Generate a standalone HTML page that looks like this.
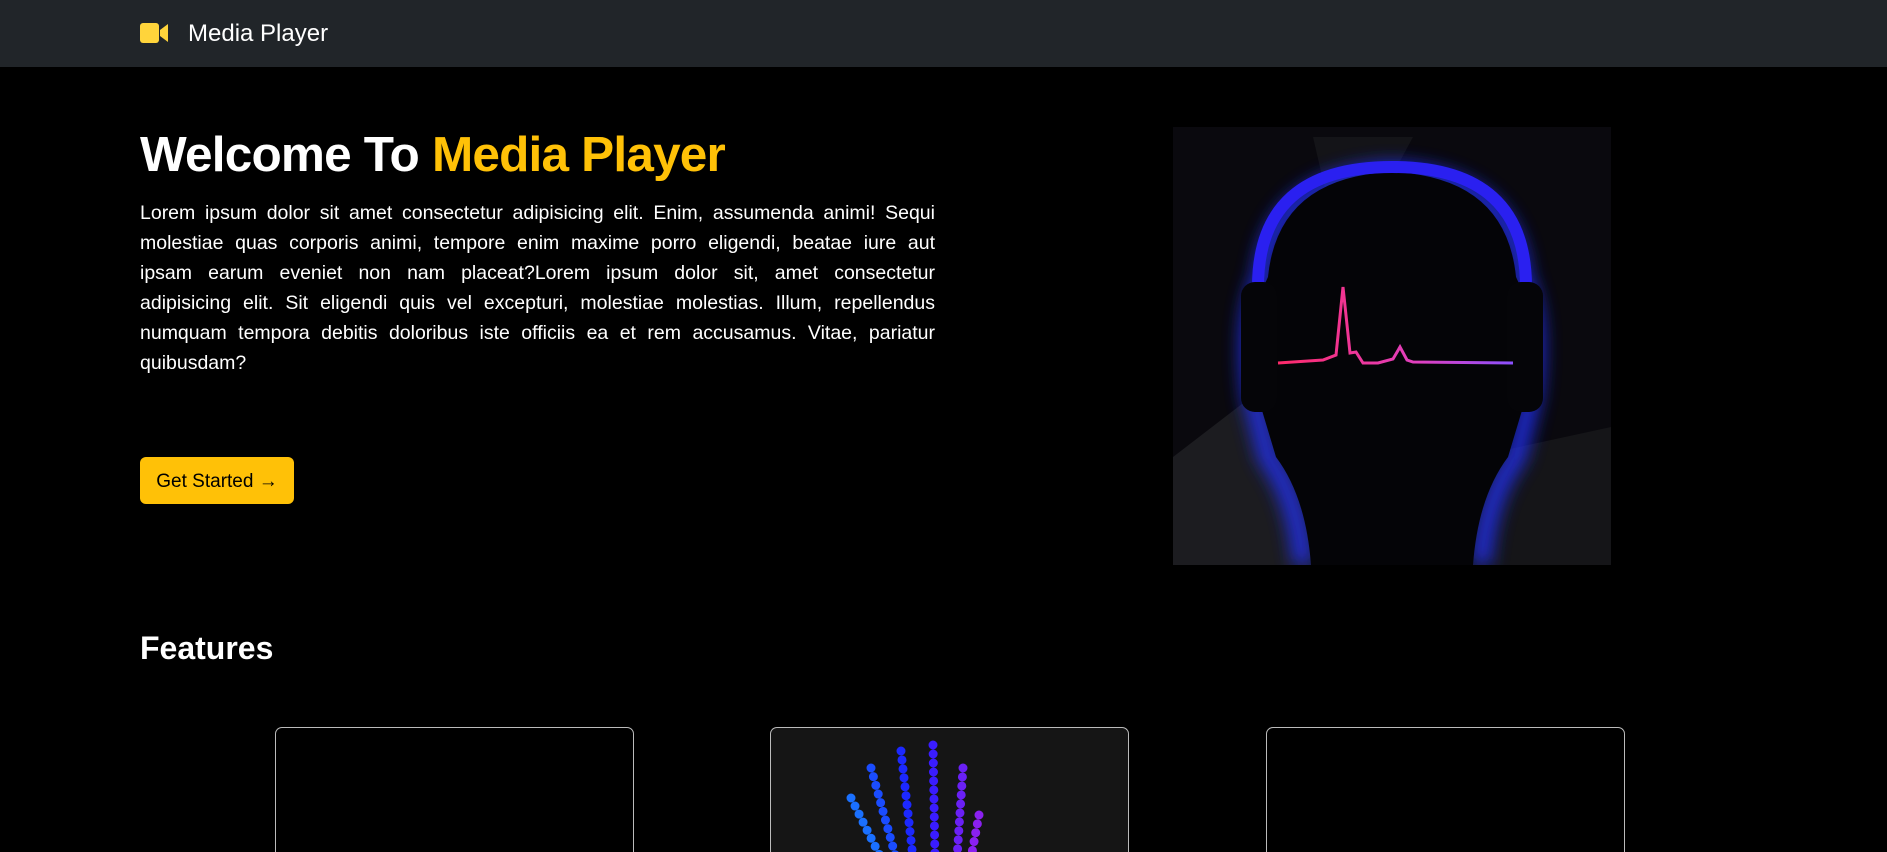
<!DOCTYPE html>
<html><head><meta charset="utf-8"><style>
*{margin:0;padding:0;box-sizing:border-box}
html{width:1887px;height:852px;overflow:hidden}
body{width:1887px;height:852px;background:#000;color:#fff;font-family:"Liberation Sans",sans-serif;overflow:hidden;position:relative}
.nav{position:absolute;left:0;top:0;width:1887px;height:67px;background:#212529}
.brand{position:absolute;left:188px;top:20px;font-size:24px;color:#fff}
h1{position:absolute;left:140px;top:126px;font-size:49.5px;font-weight:bold;letter-spacing:-0.8px;white-space:nowrap}
h1 span{color:#ffc107}
.p{position:absolute;left:140px;top:198px;width:795px;font-size:19.5px;line-height:30px}
.p div{text-align:justify;text-align-last:justify;white-space:nowrap;overflow:visible}
.p div.l{text-align-last:left}
.btn{position:absolute;left:140px;top:457px;width:154px;height:47px;background:#ffc107;border-radius:6px;color:#000;font-size:19px;line-height:49px;text-align:center}
h2{position:absolute;left:140px;top:630px;font-size:32px;font-weight:bold}
.card{position:absolute;top:727px;width:359px;height:125px;border:1px solid #bbb;border-bottom:none;border-radius:7px 7px 0 0;background:#000;overflow:hidden}
</style></head><body>
<div class="nav">
<svg style="position:absolute;left:140px;top:23px" width="29" height="20" viewBox="0 0 29 20"><rect x="0" y="0" width="19" height="20" rx="3" fill="#ffd43b"/><path d="M20 7 L28 1 V19 L20 13Z" fill="#ffd43b"/></svg>
<div class="brand">Media Player</div>
</div>
<h1>Welcome To <span>Media Player</span></h1>
<div class="p">
<div>Lorem ipsum dolor sit amet consectetur adipisicing elit. Enim, assumenda animi! Sequi</div>
<div>molestiae quas corporis animi, tempore enim maxime porro eligendi, beatae iure aut</div>
<div>ipsam earum eveniet non nam placeat?Lorem ipsum dolor sit, amet consectetur</div>
<div>adipisicing elit. Sit eligendi quis vel excepturi, molestiae molestias. Illum, repellendus</div>
<div>numquam tempora debitis doloribus iste officiis ea et rem accusamus. Vitae, pariatur</div>
<div class="l">quibusdam?</div>
</div>
<div class="btn">Get Started &#8594;</div>
<svg style="position:absolute;left:1173px;top:127px" width="438" height="438" viewBox="0 0 438 438">
<defs>
<filter id="g"><feGaussianBlur stdDeviation="9"/></filter>
<linearGradient id="w" x1="0" x2="1"><stop offset="0" stop-color="#ff2a6a"/><stop offset=".6" stop-color="#e040c0"/><stop offset="1" stop-color="#8a50ff"/></linearGradient>
</defs>
<rect width="438" height="438" fill="#0a090e"/>
<path d="M0 438 L0 330 L130 230 L140 438Z" fill="#1c1c20"/>
<path d="M280 438 L300 330 L438 300 L438 438Z" fill="#151518"/>
<path d="M140 10 L240 10 L170 140Z" fill="#141418"/>
<path d="M130 438 Q125 370 95 330 L80 270 Q70 190 90 150 Q100 50 219 45 Q338 50 348 150 Q368 190 358 270 L343 330 Q313 370 308 438" fill="none" stroke="#2030ff" stroke-width="18" filter="url(#g)" opacity=".9"/>
<path d="M138 438 Q133 370 103 330 L85 270 Q75 190 95 150 Q105 50 219 45 Q333 50 343 150 Q363 190 353 270 L335 330 Q305 370 300 438Z" fill="#040407"/>
<path d="M85 160 Q85 40 219 40 Q353 40 353 160" fill="none" stroke="#2a20f0" stroke-width="12"/>
<rect x="68" y="155" width="36" height="130" rx="14" fill="#050508"/>
<rect x="334" y="155" width="36" height="130" rx="14" fill="#050508"/>
<path d="M105 236 L150 233 L163 228 L170 160 L177 226 L183 225 L190 236 L205 236 L220 232 L227 220 L234 233 L240 235 L340 236" fill="none" stroke="url(#w)" stroke-width="3"/>
</svg>
<h2>Features</h2>
<div class="card" style="left:275px"></div>
<div class="card" style="left:770px;background:#151515">
<svg width="359" height="125" viewBox="0 0 359 125">
<g stroke-linecap="round" stroke-width="9" stroke-dasharray="0 9" fill="none">
<path d="M80 70 L110 130" stroke="#1a70ff"/>
<path d="M100 40 L125 130" stroke="#1a4cff"/>
<path d="M130 23 L142 130" stroke="#1c28ff"/>
<path d="M162 17 L164 130" stroke="#3a1cff"/>
<path d="M192 40 L186 130" stroke="#6a20f5"/>
<path d="M208 87 L200 130" stroke="#8a20f0"/>
</g></svg>
</div>
<div class="card" style="left:1266px"></div>
</body></html>
